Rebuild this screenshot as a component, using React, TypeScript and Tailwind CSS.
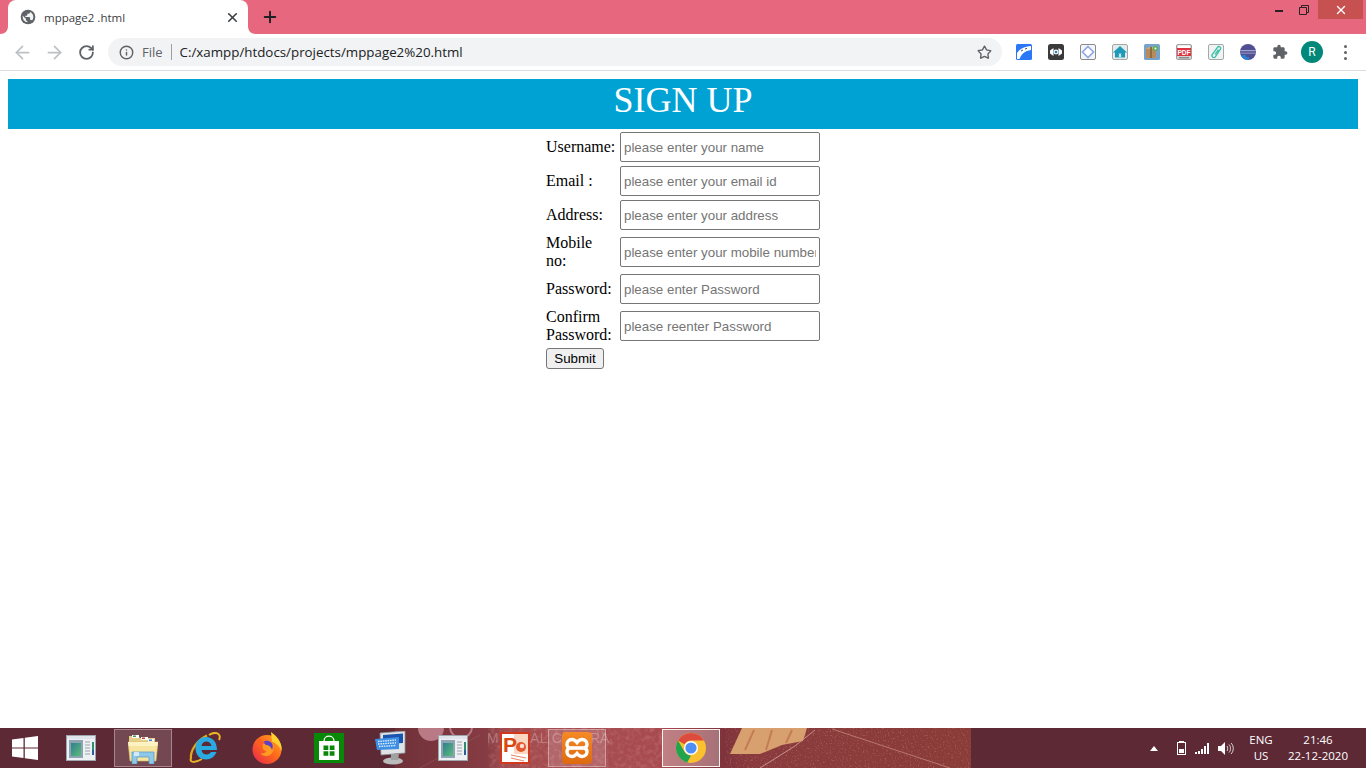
import React from "react";
import { ArrowLeft, ArrowRight, RotateCw, Info, Star, X, Plus } from "lucide-react";

const TabFlare = ({ side }: { side: "l" | "r" }) => (
  <svg width="8" height="8" viewBox="0 0 8 8" className={side === "l" ? "absolute bottom-0 -left-2" : "absolute bottom-0 -right-2"}>
    <path d={side === "l" ? "M8 0V8H0C5 8 8 5 8 0Z" : "M0 0V8H8C3 8 0 5 0 0Z"} fill="#fff" />
  </svg>
);

const Globe = () => (
  <svg width="16" height="16" viewBox="0 0 24 24" className="shrink-0">
    <circle cx="12" cy="12" r="11" fill="#5f6368" />
    <path fill="#fff" d="M11 19.93c-3.95-.49-7-3.85-7-7.93 0-.62.08-1.21.21-1.79L9 15v1c0 1.1.9 2 2 2v1.93zm6.9-2.54c-.26-.81-1-1.39-1.9-1.39h-1v-3c0-.55-.45-1-1-1H8v-2h2c.55 0 1-.45 1-1V7h2c1.1 0 2-.9 2-2v-.41c2.93 1.19 5 4.06 5 7.41 0 2.08-.8 3.97-2.1 5.39z" opacity=".92" />
  </svg>
);

const Slot = ({ children, w = "w-8" }: { children: React.ReactNode; w?: string }) => (
  <div className={`${w} h-full flex items-center justify-center shrink-0`}>{children}</div>
);

const ExtA = () => (
  <svg width="16" height="16" viewBox="0 0 16 16">
    <rect width="16" height="16" rx="1.5" fill="#2b78f6" />
    <path d="M1 9C4 4.5 9 2.5 15 2V6C9 7 6 9 3.5 15H1Z" fill="#fff" />
    <path d="M5 7l2-1M9 5l2-.7" stroke="#555" strokeWidth="1" />
  </svg>
);
const ExtB = () => (
  <svg width="16" height="16" viewBox="0 0 16 16">
    <rect width="16" height="16" rx="2.5" fill="#3a3a3c" />
    <path d="M2 6.5L5.5 4V12L2 9.5ZM14 6.5L10.5 4V12L14 9.5Z" fill="#fff" />
    <circle cx="8" cy="8" r="2.4" fill="#fff" />
    <circle cx="8" cy="8" r="1.3" fill="#2486b9" />
  </svg>
);
const ExtC = () => (
  <svg width="16" height="16" viewBox="0 0 16 16">
    <rect x=".5" y=".5" width="15" height="15" rx="1.5" fill="#f4f5f8" stroke="#8b8b8b" />
    <path d="M8 2.5L13.5 8 8 13.5 2.5 8Z" fill="#fff" stroke="#8ea6e6" strokeWidth="1.6" />
  </svg>
);
const ExtD = () => (
  <svg width="16" height="16" viewBox="0 0 16 16">
    <rect x=".5" y=".5" width="15" height="15" rx="1.5" fill="#e6eaea" stroke="#a2a8a8" />
    <path d="M8 2L15 8.5H13V13.5H3V8.5H1Z" fill="#1d9ab8" />
    <rect x="6.8" y="9.5" width="2.4" height="4" fill="#bfe3ec" />
  </svg>
);
const ExtE = () => (
  <svg width="16" height="16" viewBox="0 0 16 16">
    <rect width="16" height="16" rx="1.5" fill="#77a3cb" />
    <rect x="2" y="5" width="10" height="9" fill="#b98a5a" />
    <path d="M2 5L5 3H12L12 5Z" fill="#d3a673" />
    <rect x="6" y="3" width="2" height="11" fill="#8f6a42" />
    <circle cx="11.5" cy="4.5" r="2.6" fill="#57b257" />
    <circle cx="11.5" cy="4.5" r="1" fill="#fff" />
  </svg>
);
const ExtF = () => (
  <svg width="16" height="16" viewBox="0 0 16 16">
    <rect x=".5" y=".5" width="15" height="15" rx="1.5" fill="#d4d4d4" stroke="#a0a0a0" />
    <rect x="2" y="1.5" width="12" height="3" fill="#fff" />
    <rect x="1" y="4" width="14" height="8" fill="#e0313f" />
    <text x="8" y="10.6" textAnchor="middle" fontSize="6.5" fontWeight="700" fill="#fff" fontFamily="Liberation Sans, sans-serif">PDF</text>
    <rect x="3" y="13" width="10" height="1.5" fill="#8d8d8d" />
  </svg>
);
const ExtG = () => (
  <svg width="16" height="16" viewBox="0 0 16 16">
    <rect x=".5" y=".5" width="15" height="15" rx="1.5" fill="#f1f3f2" stroke="#a7a9a8" />
    <path d="M5.5 9L9.5 3.3C11 1.6 13.6 3 12.4 5.2L7.5 12.6C6 14.6 3 13 4.2 10.6L8.6 4.6M7 10.5L10.4 5.6" fill="none" stroke="#35bfa5" strokeWidth="1.3" />
  </svg>
);
const ExtH = () => (
  <svg width="16" height="16" viewBox="0 0 16 16">
    <defs>
      <clipPath id="exth"><circle cx="8" cy="8" r="8" /></clipPath>
    </defs>
    <g clipPath="url(#exth)">
      <rect width="16" height="16" fill="#4f5093" />
      <rect y="6" width="16" height="1.2" fill="#a5a6cc" />
      <rect y="8.6" width="16" height="1.2" fill="#8c8dbd" />
      <path d="M0 14L2.5 11H6V13H9V16H0Z" fill="#2a7fd0" />
    </g>
  </svg>
);
const Puzzle = () => (
  <svg width="16" height="16" viewBox="0 0 24 24">
    <path fill="#5f6368" d="M20.5 11H19V7c0-1.1-.9-2-2-2h-4V3.5C13 2.12 11.88 1 10.5 1S8 2.12 8 3.5V5H4c-1.1 0-1.99.9-1.99 2v3.8H3.5c1.49 0 2.7 1.21 2.7 2.7s-1.21 2.7-2.7 2.7H2V20c0 1.1.9 2 2 2h3.8v-1.5c0-1.49 1.21-2.7 2.7-2.7 1.49 0 2.7 1.21 2.7 2.7V22H17c1.1 0 2-.9 2-2v-4h1.5c1.38 0 2.5-1.12 2.5-2.5S21.88 11 20.5 11z" />
  </svg>
);

const Chrome = () => (
  <svg width="30" height="30" viewBox="0 0 30 30">
    <circle cx="15" cy="15" r="15" fill="#fbc02d" />
    <path d="M15 0A15 15 0 0 1 28 7.5H15A7.5 7.5 0 0 0 8.5 11.2L2 7.5A15 15 0 0 1 15 0Z" fill="#dd4b3e" />
    <path d="M2 7.5L8.5 18.7A7.5 7.5 0 0 0 15 22.5L11.2 29.5A15 15 0 0 1 2 7.5Z" fill="#22a350" />
    <circle cx="15" cy="15" r="7" fill="#fff" />
    <circle cx="15" cy="15" r="5.6" fill="#4e8ef5" />
  </svg>
);
const WinLogo = () => (
  <svg width="26" height="24" viewBox="0 0 26 24">
    <path fill="#fff" d="M0 3.6L11.5 2V11.4H0ZM12.8 1.8L26 0V11.4H12.8ZM0 12.6H11.5V22L0 20.4ZM12.8 12.6H26V24L12.8 22.2Z" />
  </svg>
);
const AppWin = () => (
  <svg width="30" height="26" viewBox="0 0 30 26">
    <rect x=".5" y=".5" width="29" height="25" fill="#eef1f3" stroke="#9ea7ad" />
    <rect x="1" y="1" width="28" height="3" fill="#dfe5ea" />
    <rect x="3" y="5" width="14" height="18" fill="#8fa4b3" />
    <defs>
      <linearGradient id="awg" x1="0" y1="0" x2="1" y2="1">
        <stop offset="0" stopColor="#2f7f8f" />
        <stop offset="1" stopColor="#5dbb7a" />
      </linearGradient>
    </defs>
    <rect x="5" y="8" width="10" height="13" fill="url(#awg)" />
    <path d="M19 7h5M19 10h5M19 13h5M19 16h5M19 19h5" stroke="#9aa3a8" />
    <rect x="26" y="7" width="2" height="8" fill="#2d8f6b" />
    <rect x="26" y="15" width="2" height="5" fill="#305a9c" />
  </svg>
);
const Explorer = () => (
  <svg width="30" height="32" viewBox="0 0 30 32">
    <path d="M1 4H10L12 6H27V12H1Z" fill="#e6cf86" />
    <rect x="4" y="3" width="7" height="3" fill="#fff" />
    <rect x="5" y="3.5" width="3" height="1.5" fill="#3aa04a" />
    <rect x="13" y="5" width="7" height="3" fill="#fff" />
    <rect x="14" y="5.5" width="3" height="1.5" fill="#c8443a" />
    <rect x="20" y="7" width="6" height="3" fill="#fff" />
    <rect x="21" y="7.5" width="3" height="1.5" fill="#3b7fd0" />
    <path d="M0 10H30L28 29H2Z" fill="#f7e49e" stroke="#d4b868" strokeWidth=".6" />
    <path d="M0 10H30L29.5 14H.5Z" fill="#fcf2c4" />
    <path d="M4 32V20H26V32H21V25H9V32Z" fill="#8fc8e8" stroke="#4f97c6" strokeWidth=".7" />
    <rect x="6" y="20" width="5" height="4" fill="#e3f4fc" opacity=".8" />
  </svg>
);
const IE = () => (
  <svg width="32" height="32" viewBox="0 0 32 32">
    <path d="M2 26C0 31 6 31 13 27M20 3C26 -1 33 1 30 8" fill="none" stroke="#e9b527" strokeWidth="2" />
    <path d="M2 27C1 19 7 9 18 3.5" fill="none" stroke="#e2a91f" strokeWidth="2.2" />
    <path d="M6.5 16C6.5 9.5 11 5 17 5 23.5 5 28 10 28 18H12.5C13 21 15 22.5 17.5 22.5 19.5 22.5 21 21.5 22 20H27.5C26 24.5 22 27.5 17 27.5 11 27.5 6.5 23 6.5 16ZM12.5 14H22.5C22 11.2 20 9.5 17.4 9.5 15 9.5 13 11.2 12.5 14Z" fill="#29aae1" fillRule="evenodd" />
  </svg>
);
const Firefox = () => (
  <svg width="30" height="32" viewBox="0 0 30 32">
    <defs>
      <linearGradient id="ffg" x1="0" y1="1" x2="1" y2="0">
        <stop offset="0" stopColor="#e6234f" />
        <stop offset=".55" stopColor="#ff6a1a" />
        <stop offset="1" stopColor="#ffb02a" />
      </linearGradient>
    </defs>
    <circle cx="15" cy="17.5" r="14.5" fill="url(#ffg)" />
    <path d="M19 0C26 5 30.5 11 29.5 19C27.5 14 24 11 20 9.5Z" fill="#ffd02f" />
    <path d="M9 11C12 7.5 19 8 21 12 23 17 21 23 15 24 12 24.5 9.5 23 8.5 21 11 22 13.5 21 14.5 19 12 19 10 16 11 14Z" fill="#ff9a22" />
    <path d="M11 10C14 8 18 8.5 20 11.5 21 13 21 16 20 18 19.5 15 17 13 14 13 13 12 11.5 11 11 10Z" fill="#5b3fc4" />
    <path d="M7 5C8 8 10 10 13 10.5L7.5 15Z" fill="#ff5a2a" />
  </svg>
);
const Store = () => (
  <svg width="30" height="30" viewBox="0 0 30 30">
    <rect width="30" height="30" fill="#078807" />
    <path d="M10 8C10 1.5 20 1.5 20 8" fill="none" stroke="#fff" strokeWidth="1.2" />
    <path d="M5 8H25V27H5Z" fill="#fff" />
    <path d="M9.5 12.5H14.3V17H9.5ZM15.7 12.5H20.5V17H15.7ZM9.5 18.3H14.3V22.8H9.5ZM15.7 18.3H20.5V22.8H15.7Z" fill="#078807" />
  </svg>
);
const Keyboard = () => (
  <svg width="32" height="34" viewBox="0 0 32 34">
    <path d="M5 2L30 0V22L6 24Z" fill="#dfe3e6" stroke="#8c9296" strokeWidth=".8" />
    <path d="M8 4L28 2.5V12L8 13Z" fill="#1a54b0" />
    <ellipse cx="18" cy="30" rx="10" ry="3.6" fill="#b9bcba" />
    <path d="M16 23H24L23 29H16Z" fill="#9ea2a0" />
    <path d="M0 8L24 6V18L2 19Z" fill="#3d8fe3" />
    <path d="M3 10.5L21 9M3 13L21 11.8M4 15.5L21 14.5" stroke="#d9ecff" strokeWidth="1.4" strokeDasharray="1.6 .8" />
  </svg>
);
const Ppt = () => (
  <svg width="30" height="32" viewBox="0 0 30 32">
    <rect x="1" y="1" width="28" height="30" fill="#fff" stroke="#d2381b" strokeWidth="2" />
    <path d="M14 2H28V22H14Z" fill="#fbd6c0" />
    <text x="3" y="20" fontSize="21" fontWeight="700" fill="#d9480f" fontFamily="Liberation Sans, sans-serif">P</text>
    <circle cx="21" cy="15" r="5" fill="#e4572e" />
    <circle cx="22" cy="14" r="2.2" fill="#f9e0d2" />
    <path d="M11 23L26 26M11 26L24 29" stroke="#e58a6a" strokeWidth="1.2" />
  </svg>
);
const Xampp = () => (
  <svg width="30" height="32" viewBox="0 0 30 32">
    <defs>
      <linearGradient id="xg" x1="0" y1="0" x2="0" y2="1">
        <stop offset="0" stopColor="#f58a26" />
        <stop offset="1" stopColor="#dd6a10" />
      </linearGradient>
    </defs>
    <rect width="30" height="32" rx="4" fill="url(#xg)" />
    <path d="M10 7.5C6.5 7.5 5 10 5 12.4 5 14.4 6.5 15.6 8 16 6.5 16.4 5 17.6 5 19.6 5 22 6.5 24.5 10 24.5 12.5 24.5 14 22.8 15 21.5 16 22.8 17.5 24.5 20 24.5 23.5 24.5 25 22 25 19.6 25 17.6 23.5 16.4 22 16 23.5 15.6 25 14.4 25 12.4 25 10 23.5 7.5 20 7.5 17.5 7.5 16 9.2 15 10.5 14 9.2 12.5 7.5 10 7.5Z" fill="none" stroke="#fff" strokeWidth="3.4" />
    <rect x="9" y="14.2" width="12" height="3.6" fill="#fff" />
  </svg>
);

const Wallpaper = () => (
  <svg width="576" height="40" viewBox="395 728 576 40" className="absolute top-0 left-[395px]">
    <defs>
      <filter id="noise" x="0" y="0" width="100%" height="100%">
        <feTurbulence type="fractalNoise" baseFrequency="0.22" numOctaves="3" seed="4" />
        <feColorMatrix values="0 0 0 0 1  0 0 0 0 .72  0 0 0 0 .68  0 0 0 1.4 -.6" />
      </filter>
      <filter id="speck" x="0" y="0" width="100%" height="100%">
        <feTurbulence type="fractalNoise" baseFrequency="0.6" numOctaves="2" seed="9" />
        <feColorMatrix values="0 0 0 0 1  0 0 0 0 .8  0 0 0 0 .75  0 0 0 2.4 -1.35" />
      </filter>
      <linearGradient id="wlg" x1="0" y1="0" x2="1" y2="0">
        <stop offset="0" stopColor="#703139" />
        <stop offset=".16" stopColor="#863c43" />
        <stop offset=".19" stopColor="#a34c4f" />
        <stop offset=".46" stopColor="#a84b50" />
        <stop offset=".57" stopColor="#7e333b" />
        <stop offset=".62" stopColor="#8a3a3c" />
        <stop offset="1" stopColor="#8a3c38" />
      </linearGradient>
    </defs>
    <rect x="395" y="728" width="576" height="40" fill="url(#wlg)" />
    <rect x="488" y="728" width="175" height="40" filter="url(#noise)" opacity=".28" />
    <rect x="725" y="728" width="246" height="40" filter="url(#speck)" opacity=".3" />
    <circle cx="431" cy="728" r="13" fill="#b97985" />
    <circle cx="461" cy="727" r="11" fill="none" stroke="#b97985" strokeWidth="2" />
    <path d="M420 768L480 735" stroke="#a35a5e" strokeWidth=".8" opacity=".6" />
    <path d="M730 754L742 728H807L803 741 782 745 760 754Z" fill="#d8a06e" />
    <path d="M745 750L754 730M766 750L772 730M786 743L792 730" stroke="#b55f42" strokeWidth="2" opacity=".55" />
    <path d="M760 768L795 746 815 730" stroke="#c9908a" strokeWidth="1" fill="none" />
    <path d="M832 729L950 768" stroke="#b77770" strokeWidth="1" fill="none" />
    <g fontSize="14" fill="#fff" opacity=".25" fontFamily="Liberation Sans, sans-serif">
      <text x="487" y="743">MI</text>
      <text x="530" y="743" letterSpacing=".4">AL C</text>
      <text x="590" y="743">RA</text>
    </g>
  </svg>
);

const TaskBtn = ({ children, state }: { children: React.ReactNode; state?: "open" | "active" }) => (
  <div
    className={
      "w-[58px] h-[38px] flex items-center justify-center shrink-0 border " +
      (state === "open"
        ? "bg-white/15 border-white/35"
        : state === "active"
        ? "bg-white/30 border-white/90"
        : "border-transparent")
    }
  >
    {children}
  </div>
);

const fields = [
  ["Username:", "please enter your name"],
  ["Email :", "please enter your email id"],
  ["Address:", "please enter your address"],
  ["Mobile no:", "please enter your mobile number"],
  ["Password:", "please enter Password"],
  ["Confirm Password:", "please reenter Password"],
];

export default function App() {
  return (
    <div className="w-[1366px] h-[768px] flex flex-col overflow-hidden bg-white font-['Liberation_Sans',sans-serif]">
      {/* tab strip */}
      <div className="h-[34px] shrink-0 bg-[#e7677f] flex pl-2 relative">
        <div className="relative w-[240px] h-[34px] bg-white rounded-t-lg flex items-center pl-3 pr-2">
          <TabFlare side="l" />
          <TabFlare side="r" />
          <Globe />
          <span className="ml-2 mt-px text-[11.5px] text-[#3c4043] font-['Open_Sans',sans-serif] whitespace-nowrap">mppage2 .html</span>
          <X size={15} strokeWidth={2.6} className="ml-auto text-[#3c4043]" />
        </div>
        <Plus size={18} strokeWidth={2.6} className="ml-[13px] mt-2 text-[#202124]" />
        <div className="ml-auto flex items-start h-[19px] pr-[3px]">
          <div className="w-[26px] h-full flex items-center justify-center">
            <div className="w-2 h-[2px] bg-[#2b2024] mt-[3px]" />
          </div>
          <div className="w-[26px] h-full flex items-center justify-center pr-[2px]">
            <svg width="10" height="10" viewBox="0 0 10 10">
              <path d="M.5 2.5H7.5V9.5H.5ZM2.5 2.5V.5H9.5V7.5H7.5" fill="none" stroke="#2b2024" />
            </svg>
          </div>
          <div className="w-[45px] h-full bg-[#c75050] flex items-center justify-center">
            <X size={14} strokeWidth={2.4} className="text-white" />
          </div>
        </div>
      </div>

      {/* toolbar */}
      <div className="h-[37px] shrink-0 bg-white border-b border-[#dadce0] flex items-center pl-[6px]">
        <Slot><ArrowLeft size={21} strokeWidth={2} className="text-[#bdc1c6]" /></Slot>
        <Slot><ArrowRight size={21} strokeWidth={2} className="text-[#bdc1c6]" /></Slot>
        <Slot><RotateCw size={17} strokeWidth={2.6} className="text-[#5f6368]" /></Slot>
        <div className="ml-[6px] w-[894px] h-7 rounded-full bg-[#f1f3f4] flex items-center pl-[11px] pr-[10px]">
          <Info size={15} strokeWidth={2.3} className="text-[#5f6368] shrink-0" />
          <span className="ml-[8px] mt-px text-[13px] text-[#5f6368] font-['Open_Sans',sans-serif]">File</span>
          <div className="ml-2 w-px h-4 bg-[#9aa0a6]" />
          <span className="ml-[8px] mt-px text-[13.33px] text-[#202124] font-['Open_Sans',sans-serif] whitespace-nowrap">C:/xampp/htdocs/projects/mppage2%20.html</span>
          <Star size={15} strokeWidth={2.2} className="ml-auto text-[#5f6368]" />
        </div>
        <Slot w="w-8 ml-[6px]"><ExtA /></Slot>
        <Slot><ExtB /></Slot>
        <Slot><ExtC /></Slot>
        <Slot><ExtD /></Slot>
        <Slot><ExtE /></Slot>
        <Slot><ExtF /></Slot>
        <Slot><ExtG /></Slot>
        <Slot><ExtH /></Slot>
        <Slot><Puzzle /></Slot>
        <Slot>
          <div className="w-[22px] h-[22px] rounded-full bg-[#00897b] flex items-center justify-center text-white text-xs font-['Roboto',sans-serif]">R</div>
        </Slot>
        <Slot w="w-8 ml-px">
          <div className="flex flex-col gap-[3px]">
            <div className="w-[3px] h-[3px] rounded-full bg-[#5f6368]" />
            <div className="w-[3px] h-[3px] rounded-full bg-[#5f6368]" />
            <div className="w-[3px] h-[3px] rounded-full bg-[#5f6368]" />
          </div>
        </Slot>
      </div>

      {/* page */}
      <div className="flex-1 min-h-0 p-2 font-['Liberation_Serif',serif] text-base text-black">
        <h1 className="h-[50px] bg-[#00a2d3] text-white text-center text-[36px] leading-[41px] pt-[1px]">SIGN UP</h1>
        <form>
          <table className="table-fixed w-[280px] mx-auto border-separate border-spacing-[2px]">
            <tbody>
              {fields.map(([label, ph]) => (
                <tr key={label}>
                  <td className="w-[72px] p-px align-middle leading-[18px]">{label}</td>
                  <td className="w-[202px] p-px align-middle">
                    <input
                      placeholder={ph}
                      className="block w-[200px] h-[30px] border border-[#767676] rounded-[2px] px-[3px] text-[13.33px] font-['Liberation_Sans',sans-serif] placeholder:text-[#757575] bg-white"
                    />
                  </td>
                </tr>
              ))}
              <tr>
                <td className="p-px" colSpan={2}>
                  <button type="button" className="block w-[58px] h-[21px] bg-[#efefef] border border-[#767676] rounded-[3px] text-[13.33px] leading-none text-black font-['Liberation_Sans',sans-serif]">Submit</button>
                </td>
              </tr>
            </tbody>
          </table>
        </form>
      </div>

      {/* taskbar */}
      <div className="relative h-10 shrink-0 bg-[#5c2935] flex items-center">
        <Wallpaper />
        <div className="relative flex items-center gap-1 w-full">
          <div className="w-[48px] flex justify-end pr-[10px] shrink-0"><WinLogo /></div>
          <TaskBtn><AppWin /></TaskBtn>
          <TaskBtn state="open"><Explorer /></TaskBtn>
          <TaskBtn><IE /></TaskBtn>
          <TaskBtn><Firefox /></TaskBtn>
          <TaskBtn><Store /></TaskBtn>
          <TaskBtn><Keyboard /></TaskBtn>
          <TaskBtn><AppWin /></TaskBtn>
          <TaskBtn><Ppt /></TaskBtn>
          <TaskBtn state="open"><Xampp /></TaskBtn>
          <div className="w-[48px] shrink-0" />
          <TaskBtn state="active"><Chrome /></TaskBtn>
          <div className="ml-auto flex items-center text-white text-[11.5px] font-['Open_Sans',sans-serif]">
            <svg width="8" height="5" viewBox="0 0 8 5" className="mr-[19px]"><path d="M4 0L8 5H0Z" fill="#fff" /></svg>
            <svg width="9" height="14" viewBox="0 0 9 14" className="mr-[9px]">
              <rect x=".5" y="1.5" width="8" height="12" fill="none" stroke="#fff" />
              <rect x="2" y="0" width="5" height="1.5" fill="#fff" />
              <rect x="2" y="8" width="5" height="4" fill="#fff" />
            </svg>
            <svg width="15" height="11" viewBox="0 0 15 11" className="mr-[8px]">
              <path d="M0 9h2v2H0ZM3 8h2v3H3ZM6 6h2v5H6ZM9 3h2v8H9ZM12 0h2v11h-2Z" fill="#fff" />
            </svg>
            <svg width="16" height="13" viewBox="0 0 16 13" className="mr-[14px]">
              <path d="M0 4H3L7 0V13L3 9H0Z" fill="#fff" />
              <path d="M9 4C10 5 10 8 9 9M11 2.5C13 4.5 13 8.5 11 10.5M13 1C16 4 16 9 13 12" stroke="#fff" fill="none" strokeWidth=".8" />
            </svg>
            <div className="flex flex-col items-center leading-[16px] w-[26px]">
              <span>ENG</span>
              <span>US</span>
            </div>
            <div className="flex flex-col items-center leading-[16px] w-[74px] ml-[7px] mr-[11px]">
              <span>21:46</span>
              <span>22-12-2020</span>
            </div>
          </div>
        </div>
      </div>
    </div>
  );
}
